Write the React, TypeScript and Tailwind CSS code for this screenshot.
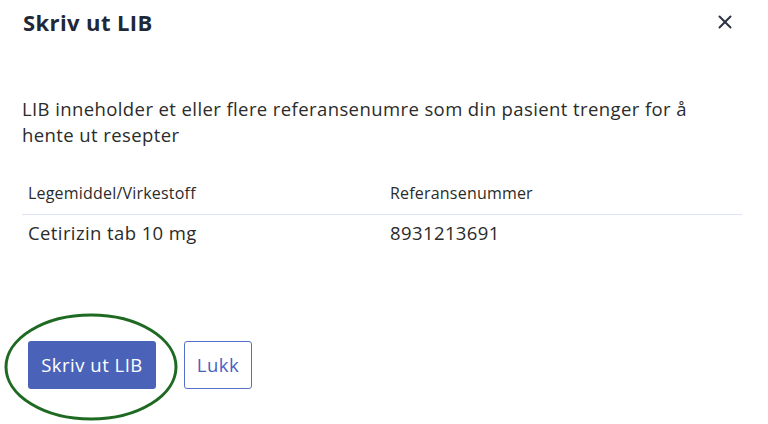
import { X } from "lucide-react";

export default function App() {
  return (
    <div
      className="w-[768px] h-[424px] bg-white relative overflow-hidden text-[#2b2b2b]"
      style={{ fontFamily: '"Open Sans", Lato, sans-serif' }}
    >
      <div className="flex items-start justify-between pl-[23px] pr-[32px] pt-[7px]">
        <h1 className="text-[22px] font-bold text-[#1e2838] leading-[30px] tracking-[0.4px]">Skriv ut LIB</h1>
        <button className="mt-[4px] text-[#2b3442]">
          <X size={22} strokeWidth={2.2} />
        </button>
      </div>

      <div className="pl-[22px] pr-[26px] mt-[59px]">
        <p className="text-[18.5px] leading-[26px] max-w-[680px] tracking-[0.4px]">
          LIB inneholder et eller flere referansenumre som din pasient trenger for å hente ut resepter
        </p>

        <div className="mt-[35px]">
          <div className="grid grid-cols-[362px_1fr] text-[16px] leading-[20px] pl-[6px] pb-[11px] border-b border-[#dde3f2] tracking-[0.2px]">
            <span>Legemiddel/Virkestoff</span>
            <span>Referansenummer</span>
          </div>
          <div className="grid grid-cols-[362px_1fr] text-[18.5px] leading-[24px] pl-[6px] pt-[6px] tracking-[0.4px]">
            <span>Cetirizin tab 10 mg</span>
            <span>8931213691</span>
          </div>
        </div>
      </div>

      <div className="flex gap-[28px] pl-[28px] mt-[96px]">
        <button className="w-[128px] h-[48px] rounded-[3px] bg-[#4a63b8] text-white text-[18.5px] tracking-[0.5px]">
          Skriv ut LIB
        </button>
        <button className="w-[68px] h-[48px] rounded-[3px] border border-[#5670c9] text-[#4a5fc0] text-[18.5px] tracking-[0.5px]">
          Lukk
        </button>
      </div>

      <svg
        className="absolute left-0 top-0 pointer-events-none"
        width="768"
        height="424"
        viewBox="0 0 768 424"
      >
        <ellipse cx="91" cy="367" rx="85" ry="52" fill="none" stroke="#1f6a22" strokeWidth="3" />
      </svg>
    </div>
  );
}
